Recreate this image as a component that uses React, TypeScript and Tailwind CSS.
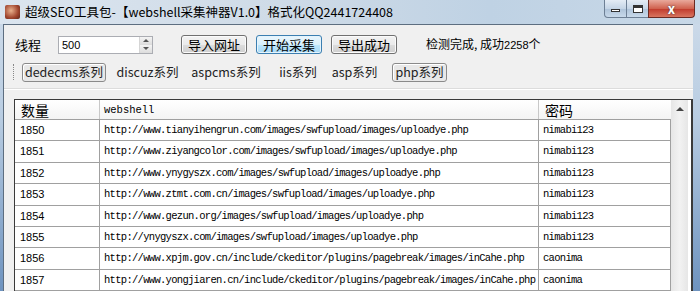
import React from "react";

const rows = [
  ["1850", "http://www.tianyihengrun.com/images/swfupload/images/uploadye.php", "nimabi123"],
  ["1851", "http://www.ziyangcolor.com/images/swfupload/images/uploadye.php", "nimabi123"],
  ["1852", "http://www.ynygyszx.com/images/swfupload/images/uploadye.php", "nimabi123"],
  ["1853", "http://www.ztmt.com.cn/images/swfupload/images/uploadye.php", "nimabi123"],
  ["1854", "http://www.gezun.org/images/swfupload/images/uploadye.php", "nimabi123"],
  ["1855", "http://ynygyszx.com/images/swfupload/images/uploadye.php", "nimabi123"],
  ["1856", "http://www.xpjm.gov.cn/include/ckeditor/plugins/pagebreak/images/inCahe.php", "caonima"],
  ["1857", "http://www.yongjiaren.cn/include/ckeditor/plugins/pagebreak/images/inCahe.php", "caonima"],
];

const cjk = "font-['Microsoft_YaHei','Noto_Sans_CJK_SC',sans-serif]";
const mono = "font-['Liberation_Mono','Noto_Sans_CJK_SC',monospace]";

function Btn({ label, primary }: { label: string; primary?: boolean }) {
  return (
    <button
      className={
        "h-[19px] w-[66px] rounded-[3px] border text-[13px] leading-none text-black " +
        (primary
          ? "border-[#3c7fb1] bg-[linear-gradient(#eaf6fd,#d9f0fc_50%,#bee6fd_51%,#a7d9f5)] shadow-[inset_0_0_0_1px_#e5f4fc]"
          : "border-[#707070] bg-[linear-gradient(#f2f2f2,#ebebeb_50%,#dddddd_51%,#cfcfcf)] shadow-[inset_0_0_0_1px_#fbfbfb]")
      }
    >
      {label}
    </button>
  );
}

function Tab({ label, on, w }: { label: string; on?: boolean; w: string }) {
  return (
    <div
      className={
        "flex h-[19px] items-center justify-center whitespace-nowrap text-[12.5px] leading-none text-[#222] " +
        w +
        (on ? " rounded-[3px] border border-[#8a8a8a] bg-[#e8e8e8] shadow-[inset_1px_1px_0_#fff]" : "")
      }
    >
      {label}
    </div>
  );
}

export default function App() {
  return (
    <div className={"flex h-[291px] w-[700px] flex-col overflow-hidden bg-[linear-gradient(#cfdcea,#b9cde2_40%,#6e93bf)] " + cjk}>
      {/* title bar */}
      <div className="flex h-[24px] shrink-0 items-start bg-[linear-gradient(90deg,#dbe5ef,#cfdbe7_40%,#bfd2e4_70%,#c8d8e7)]">
        <div className="ml-[5px] mt-[5px] h-[14px] w-[15px] rounded-[2px] bg-[radial-gradient(circle_at_40%_40%,#e9b08c,#a0452e_60%,#5b2518)]" />
        <div className="ml-[5px] mt-[3px] text-[12.5px] leading-[18px] text-black">
          超级SEO工具包-【webshell采集神器V1.0】格式化QQ2441724408
        </div>
        <div className="ml-auto mr-[5px] flex h-[18px]">
          <div className="flex w-[23px] items-center justify-center rounded-bl-[4px] border border-t-0 border-[#6d7f94] bg-[linear-gradient(#e4ecf5,#c5d5e6_50%,#adc2d8_51%,#c8d9ea)]">
            <div className="mt-[4px] h-[3px] w-[9px] border border-[#333] bg-white" />
          </div>
          <div className="flex w-[21px] items-center justify-center border-b border-[#6d7f94] bg-[linear-gradient(#e4ecf5,#c5d5e6_50%,#adc2d8_51%,#c8d9ea)]">
            <div className="h-[8px] w-[10px] border border-[#333] bg-white shadow-[inset_0_2px_0_#333]" />
          </div>
          <div className="flex w-[47px] items-center justify-center rounded-br-[4px] border border-t-0 border-[#6b2a22] bg-[linear-gradient(#e9a99c,#d0624f_50%,#c0392b_51%,#d9755f)] text-[13px] font-bold leading-none text-white [text-shadow:0_0_2px_#333]">
            x
          </div>
        </div>
      </div>

      {/* client area */}
      <div className="ml-[3px] mr-[7px] flex flex-1 flex-col border-l border-t border-[#5d6e80] bg-[#f0f0f0]">
        <div className="mt-[10px] flex h-[19px] items-center pl-[11px]">
          <span className="w-[43px] text-[13px] text-black">线程</span>
          <div className="flex h-[18px] w-[95px] border border-[#abadb3] bg-white">
            <span className="flex-1 pl-[3px] font-['Liberation_Sans',sans-serif] text-[11px] leading-[16px]">500</span>
            <div className="flex w-[13px] flex-col border-l border-[#d5d5d5]">
              <div className="flex flex-1 items-center justify-center bg-[linear-gradient(#f4f4f4,#dcdcdc)]">
                <div className="h-0 w-0 border-x-[3px] border-b-[3px] border-x-transparent border-b-[#555]" />
              </div>
              <div className="flex flex-1 items-center justify-center bg-[linear-gradient(#f4f4f4,#dcdcdc)]">
                <div className="h-0 w-0 border-x-[3px] border-t-[3px] border-x-transparent border-t-[#555]" />
              </div>
            </div>
          </div>
          <div className="ml-[28px] flex gap-[9px]">
            <Btn label="导入网址" />
            <Btn label="开始采集" primary />
            <Btn label="导出成功" />
          </div>
          <span className="ml-[29px] text-[12px] text-black">
            检测完成, 成功<span className="font-['Liberation_Sans',sans-serif] text-[11px]">2258</span>个
          </span>
        </div>

        <div className="mt-[8px] flex h-[20px] items-center pl-[9px]">
          <div className="h-[16px] w-[1px] border-l border-dotted border-[#888]" />
          <div className="ml-[8px] flex items-center">
            <Tab label="dedecms系列" on w="w-[84px]" />
            <Tab label="discuz系列" w="ml-[7px] w-[69px]" />
            <Tab label="aspcms系列" w="ml-[6px] w-[76px]" />
            <Tab label="iis系列" w="ml-[8px] w-[52px]" />
            <Tab label="asp系列" w="ml-[4px] w-[53px]" />
            <Tab label="php系列" on w="ml-[11px] w-[55px]" />
          </div>
        </div>
        <div className="mt-[6px] h-[1px] bg-[#dcdcdc] shadow-[0_1px_0_#fff]" />

        {/* list */}
        <div className="ml-[10px] mt-[10px] flex flex-1 border border-r-2 border-[#3a3a3a] bg-white">
          <div className="w-[656px]">
            <div className="flex h-[20px] border-b border-[#a0a0a0] bg-[linear-gradient(#ffffff,#f4f4f4)]">
              <div className="w-[85px] border-r border-[#c8c8c8] pl-[6px] text-[14px] leading-[20px]">数量</div>
              <div className={"w-[439px] border-r border-[#c8c8c8] pl-[4px] text-[10.5px] leading-[20px] " + mono}>webshell</div>
              <div className="flex-1 pl-[6px] text-[14px] leading-[20px]">密码</div>
            </div>
            {rows.map(([n, url, pw]) => (
              <div key={n} className="flex h-[21.4px] border-b border-[#a0a0a0]">
                <div className="w-[85px] border-r border-[#a0a0a0] pl-[5px] font-['Liberation_Sans',sans-serif] text-[11px] leading-[20px]">{n}</div>
                <div className={"w-[439px] whitespace-nowrap border-r border-[#a0a0a0] pl-[4px] text-[10.5px] leading-[20px] tracking-[-0.7px] " + mono}>{url}</div>
                <div className={"flex-1 border-r border-[#a0a0a0] pl-[4px] text-[10.5px] leading-[20px] tracking-[-0.7px] " + mono}>{pw}</div>
              </div>
            ))}
          </div>
          <div className="flex w-[17px] flex-col bg-[linear-gradient(90deg,#e6e6e6,#f2f2f2,#e6e6e6)]">
            <div className="flex h-[17px] items-center justify-center">
              <div className="h-0 w-0 border-x-[4px] border-b-[4px] border-x-transparent border-b-[#444]" />
            </div>
          </div>
        </div>
      </div>
    </div>
  );
}
